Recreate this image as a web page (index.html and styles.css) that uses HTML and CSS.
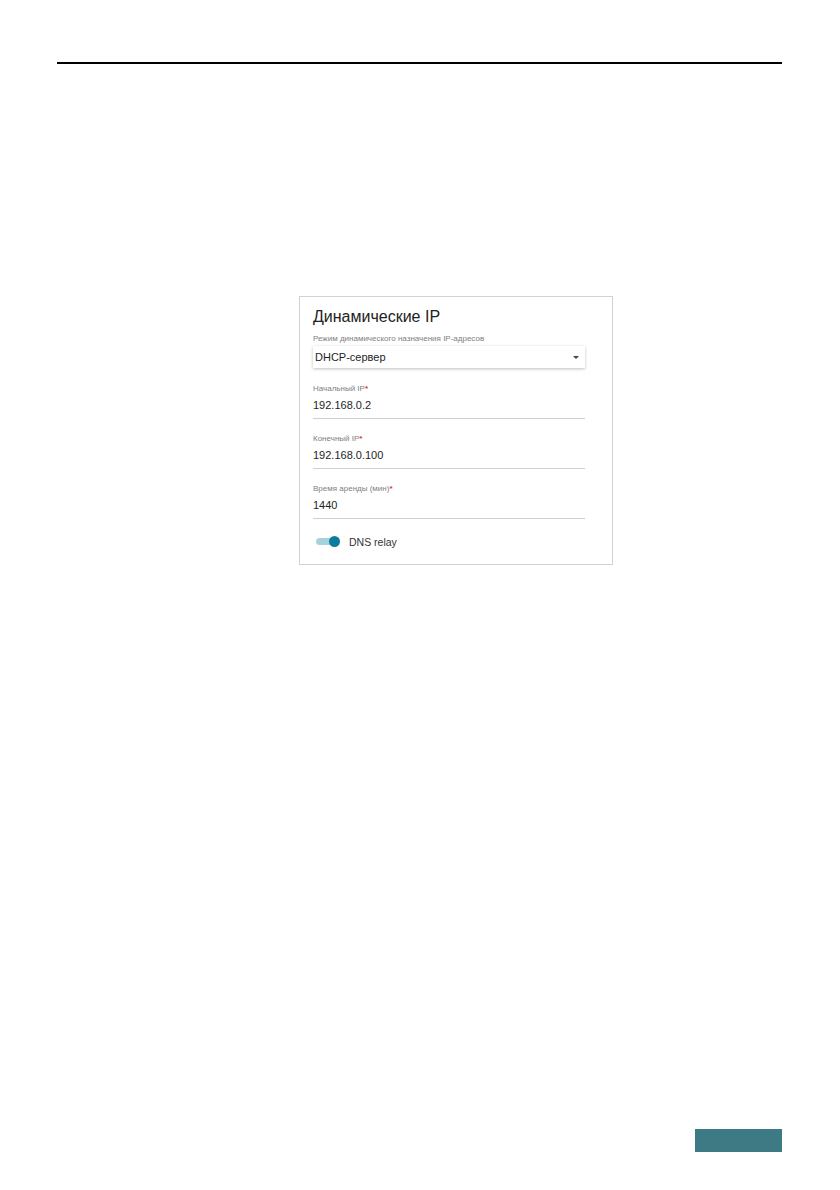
FILE: index.html
```html
<!DOCTYPE html>
<html lang="ru">
<head>
    <meta charset="UTF-8">
    <title>Динамические IP</title>
    <link rel="stylesheet" href="styles.css">
</head>
<body>
    <div class="page">
        <div class="rule"></div>

        <!-- карточка настроек DHCP -->
        <div class="card">
            <h2>Динамические IP</h2>

            <div class="field select-field">
                <label>Режим динамического назначения IP-адресов</label>
                <div class="select">
                    <span>DHCP-сервер</span>
                    <span class="arrow"></span>
                </div>
            </div>

            <div class="field">
                <label>Начальный IP<span class="req">*</span></label>
                <div class="value">192.168.0.2</div>
            </div>

            <div class="field">
                <label>Конечный IP<span class="req">*</span></label>
                <div class="value">192.168.0.100</div>
            </div>

            <div class="field">
                <label>Время аренды (мин)<span class="req">*</span></label>
                <div class="value">1440</div>
            </div>

            <div class="switch-row">
                <div class="switch">
                    <div class="track"></div>
                    <div class="knob"></div>
                </div>
                <span>DNS relay</span>
            </div>
        </div>

        <div class="footer">
            <div class="page-tab"></div>
        </div>
    </div>
</body>
</html>
```

FILE: styles.css
```css
body {
    margin: 0;
    font-family: 'Liberation Sans', Arial, sans-serif;
    background: #fff;
    color: #222;
}

.page {
    display: flex;
    flex-direction: column;
    min-height: 1190px;
    box-sizing: border-box;
    padding: 62px 58px 38px 57px;
}

.rule {
    height: 2px;
    background: #000;
}

.card {
    margin: 232px 0 0 242px;
    width: 314px;
    box-sizing: border-box;
    border: 1px solid #d2d2d2;
    padding: 10px 27px 15px 13px;
}

h2 {
    margin: 0 0 7px;
    font-size: 16px;
    line-height: 20px;
    font-weight: normal;
    color: #222;
}

.field {
    margin-bottom: 15px;
}

.field label {
    display: block;
    font-size: 8px;
    line-height: 10px;
    color: #808080;
    margin-bottom: 4px;
}

.req {
    color: #e2362c;
    font-weight: bold;
}

.value {
    font-size: 11px;
    line-height: 14px;
    padding-bottom: 6px;
    border-bottom: 1px solid #cfcfcf;
    color: #1e1e1e;
}

.select-field {
    margin-bottom: 16px;
}

.select-field label {
    margin-bottom: 2px;
}

.select {
    height: 22px;
    display: flex;
    align-items: center;
    justify-content: space-between;
    padding: 0 6px 0 2px;
    font-size: 11px;
    line-height: 14px;
    color: #1e1e1e;
    box-shadow: 0 1px 3px rgba(0,0,0,0.25);
}

.arrow {
    width: 0;
    height: 0;
    border-left: 3px solid transparent;
    border-right: 3px solid transparent;
    border-top: 3px solid #444;
}

.switch-row {
    display: flex;
    align-items: center;
    height: 15px;
    padding-left: 3px;
    font-size: 10.5px;
    color: #333;
}

.switch {
    position: relative;
    width: 24px;
    height: 11px;
    margin-right: 9px;
}

.track {
    position: absolute;
    left: 0;
    top: 2px;
    width: 22px;
    height: 7px;
    border-radius: 4px;
    background: #a6d2dc;
}

.knob {
    position: absolute;
    right: 0;
    top: 0;
    width: 11px;
    height: 11px;
    border-radius: 50%;
    background: #0b7c9e;
}

.footer {
    margin-top: auto;
    display: flex;
    justify-content: flex-end;
}

.page-tab {
    width: 87px;
    height: 23px;
    background: #3d7a84;
}
```
